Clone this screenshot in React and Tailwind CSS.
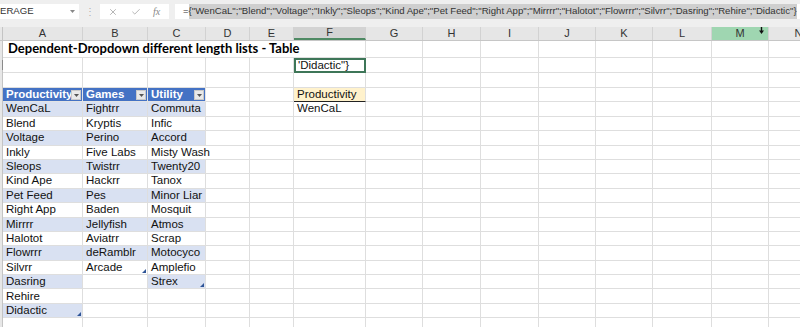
import React from "react";
import { X, Check } from "lucide-react";

const colWidths = [
  "w-[80px]",
  "w-[65px]",
  "w-[58px]",
  "w-[44px]",
  "w-[44px]",
  "w-[72px]",
  "w-[57px]",
  "w-[58px]",
  "w-[58px]",
  "w-[57px]",
  "w-[57px]",
  "w-[59px]",
  "w-[57px]",
  "w-[60px]",
];
const letters = ["A", "B", "C", "D", "E", "F", "G", "H", "I", "J", "K", "L", "M", "N"];

const productivity = ["WenCaL", "Blend", "Voltage", "Inkly", "Sleops", "Kind Ape", "Pet Feed", "Right App", "Mirrrr", "Halotot", "Flowrrr", "Silvrr", "Dasring", "Rehire", "Didactic"];
const games = ["Fightrr", "Kryptis", "Perino", "Five Labs", "Twistrr", "Hackrr", "Pes", "Baden", "Jellyfish", "Aviatrr", "deRamblr", "Arcade"];
const utility = ["Commuta", "Infic", "Accord", "Misty Wash", "Twenty20", "Tanox", "Minor Liar", "Mosquit", "Atmos", "Scrap", "Motocyco", "Amplefio", "Strex"];

const formula =
  '{"WenCaL";"Blend";"Voltage";"Inkly";"Sleops";"Kind Ape";"Pet Feed";"Right App";"Mirrrr";"Halotot";"Flowrrr";"Silvrr";"Dasring";"Rehire";"Didactic"}';

// small blue triangle at the corner of a table
const Handle = () => (
  <svg className="absolute right-[1px] bottom-[1px]" width="4" height="4" viewBox="0 0 4 4">
    <polygon points="4,0 4,4 0,4" fill="#2f5597" />
  </svg>
);

const FilterBtn = () => (
  <span className="absolute right-[1px] top-[2px] w-[10px] h-[10px] bg-[#e9e9e9] border border-[#c9c9c9] flex items-center justify-center">
    <svg width="5" height="3" viewBox="0 0 5 3">
      <polygon points="0,0 5,0 2.5,3" fill="#555" />
    </svg>
  </span>
);

const Strip = () => <div className="w-[3px] shrink-0 bg-[#e7e7e7] border-r border-[#c4c4c4]" />;

function Cell({ i, children, className = "", noRight = false }) {
  return (
    <div
      className={`${colWidths[i]} shrink-0 relative flex items-center pl-[3px] whitespace-nowrap border-b border-[#dedede] ${
        noRight ? "" : "border-r"
      } ${className}`}
    >
      {children}
    </div>
  );
}

function EmptyCells({ from }) {
  return letters.slice(from).map((l, k) => <Cell key={l} i={from + k} />);
}

export default function App() {
  return (
    <div className="w-[800px] h-[327px] overflow-hidden bg-white font-['Liberation_Sans',Arial,sans-serif] text-[#111]">
      {/* formula bar */}
      <div className="h-[27px] bg-[#efefef] flex items-start pt-[4px]">
        <div className="w-[79px] h-[15px] bg-white flex items-center justify-between pr-[4px] text-[9.6px] text-[#333]">
          <span>ERAGE</span>
          <svg width="5" height="3" viewBox="0 0 5 3">
            <polygon points="0,0 5,0 2.5,3" fill="#888" />
          </svg>
        </div>
        <div className="w-[21px] h-[15px] flex items-center justify-center text-[#b0b0b0] text-[10px]">⋮</div>
        <div className="w-[69px] h-[15px] bg-white flex items-center text-[#777]">
          <X className="ml-[8px]" size={10} strokeWidth={1.3} />
          <Check className="ml-[13px]" size={10} strokeWidth={1.3} />
          <span className="ml-[12px] font-['Liberation_Serif',serif] italic text-[10px] text-[#888]">fx</span>
        </div>
        <div className="ml-[6px] flex-1 h-[15px] bg-white flex items-stretch pl-[8px] text-[9.6px] text-[#333] whitespace-nowrap overflow-hidden">
          <span className="flex items-center">=</span>
          <span className="flex items-center bg-[#cfcfcf]">{formula}</span>
        </div>
      </div>

      {/* column letters */}
      <div className="h-[14px] flex bg-[#e6e6e6] border-b border-[#c6c6c6]">
        <Strip />
        {letters.map((l, i) => (
          <div
            key={l}
            className={`${colWidths[i]} shrink-0 relative flex items-center justify-center text-[11px] text-[#333] border-r border-[#d2d2d2] ${
              l === "F" ? "bg-[#d3d3d3] border-b-2 border-b-[#4f8a64]" : ""
            } ${l === "M" ? "bg-[#9fd6b1]" : ""}`}
          >
            {l}
            {l === "M" && (
              <svg className="absolute right-[4px] top-[0px]" width="5" height="7" viewBox="0 0 5 7">
                <rect x="1.8" y="0" width="1.4" height="4" fill="#111" />
                <polygon points="0,3.5 5,3.5 2.5,7" fill="#111" />
              </svg>
            )}
          </div>
        ))}
      </div>

      {/* row 1 - title */}
      <div className="h-[17px] flex">
        <Strip />
        <div className="w-[363px] shrink-0 flex items-center pl-[5px] border-b border-r border-[#dedede] font-['Lato',sans-serif] font-bold text-[13px] text-black whitespace-nowrap">
          Dependent-Dropdown different length lists - Table
        </div>
        <EmptyCells from={6} />
      </div>

      {/* row 2 */}
      <div className="h-[15px] flex">
        <Strip />
        <Cell i={0}>
          <span className="absolute left-[-1px] top-[2px] w-[1px] h-[10px] bg-[#8a8a8a]" />
        </Cell>
        <Cell i={1} />
        <Cell i={2} />
        <Cell i={3} />
        <Cell i={4} />
        <div className="w-[72px] shrink-0 flex items-center pl-[2px] border-2 border-[#3e7658] text-[11.5px] whitespace-nowrap">
          'Didactic"{"}"}
        </div>
        <EmptyCells from={6} />
      </div>

      {/* row 3 */}
      <div className="h-[15px] flex">
        <Strip />
        <EmptyCells from={0} />
      </div>

      {/* row 4 - table headers */}
      <div className="h-[14.4px] flex text-[11.5px]">
        <Strip />
        {["Productivity", "Games", "Utility"].map((h, i) => (
          <Cell key={h} i={i} className="bg-[#4472c4] text-white font-bold border-[#e4e4e4]">
            {h}
            <FilterBtn />
          </Cell>
        ))}
        <Cell i={3} />
        <Cell i={4} />
        <Cell i={5} className="bg-[#fff2cc] border-b-[#222]">
          Productivity
        </Cell>
        <EmptyCells from={6} />
      </div>

      {/* table body */}
      {Array.from({ length: 16 }, (_, r) => {
        const band = r % 2 === 0 ? "bg-[#d9e1f2]" : "";
        const a = productivity[r];
        const b = games[r];
        const c = utility[r];
        return (
          <div key={r} className="h-[14.4px] flex text-[11.5px]">
            <Strip />
            <Cell i={0} className={a ? band : ""}>
              {a}
              {r === 14 && <Handle />}
            </Cell>
            <Cell i={1} className={b ? band : ""}>
              {b}
              {r === 11 && <Handle />}
            </Cell>
            <Cell i={2} className={c ? band : ""} noRight={c === "Misty Wash"}>
              {c}
              {r === 12 && <Handle />}
            </Cell>
            <Cell i={3} />
            <Cell i={4} />
            <Cell i={5}>{r === 0 ? "WenCaL" : ""}</Cell>
            <EmptyCells from={6} />
          </div>
        );
      })}
    </div>
  );
}
